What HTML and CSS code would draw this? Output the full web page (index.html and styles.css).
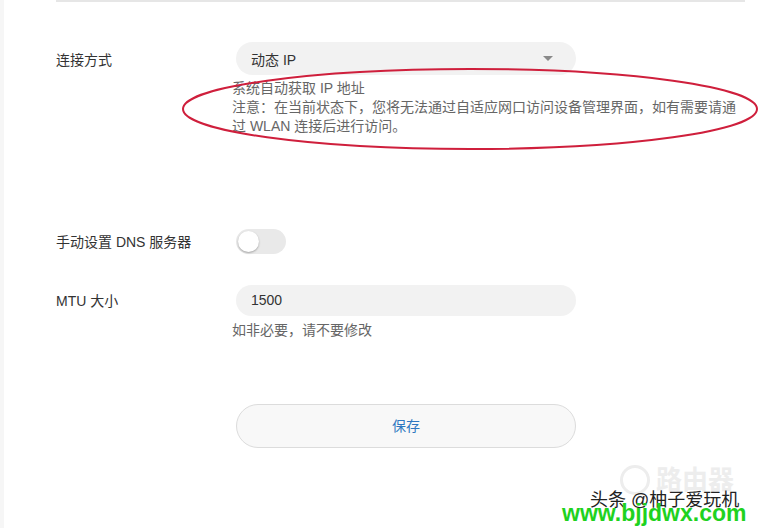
FILE: index.html
```html
<!DOCTYPE html>
<html lang="zh">
<head>
<meta charset="utf-8">
<link rel="stylesheet" href="styles.css">
</head>
<body>
<div class="page">
  <div class="rule"></div>
  <div class="form">
    <div class="row row-conn">
      <div class="label">连接方式</div>
      <div class="control">
        <div class="select">
          <span>动态 IP</span>
          <span class="caret"></span>
        </div>
        <div class="hint">系统自动获取 IP 地址<br>注意：在当前状态下，您将无法通过自适应网口访问设备管理界面，如有需要请通过 WLAN 连接后进行访问。</div>
      </div>
    </div>
    <div class="row row-dns">
      <div class="label">手动设置 DNS 服务器</div>
      <div class="control">
        <div class="toggle"><span class="knob"></span></div>
      </div>
    </div>
    <div class="row row-mtu">
      <div class="label">MTU 大小</div>
      <div class="control">
        <div class="input">1500</div>
        <div class="hint">如非必要，请不要修改</div>
      </div>
    </div>
    <div class="row row-save">
      <div class="label"></div>
      <div class="control">
        <div class="button">保存</div>
      </div>
    </div>
  </div>
  <svg class="mark" width="590" height="90" viewBox="0 0 590 90">
    <ellipse cx="289" cy="41" rx="287" ry="40" fill="none" stroke="#cf1f3c" stroke-width="2"/>
  </svg>
  <div class="wm">
    <div class="wm-logo"><span class="wm-circle"></span><span class="wm-text">路由器</span></div>
    <div class="wm-author">头条 @柚子爱玩机</div>
    <div class="wm-url">www.bjjdwx.com</div>
  </div>
</div>
</body>
</html>
```

FILE: styles.css
```css
html, body {
  margin: 0;
  padding: 0;
  background: #fff;
}
body {
  width: 760px;
  height: 528px;
  overflow: hidden;
  font-family: "Liberation Sans", "Noto Sans CJK SC", sans-serif;
  font-size: 14px;
  color: #333;
}
.page {
  position: relative;
  height: 528px;
  border-left: 4px solid #f6f6f6;
  box-sizing: border-box;
}
.rule {
  margin-left: 52px;
  width: 689px;
  height: 2px;
  background: #e6e6e6;
}
.form {
  padding-left: 52px;
  padding-top: 40px;
}
.row {
  display: grid;
  grid-template-columns: 180px 340px;
  align-items: start;
}
.label {
  line-height: 33px;
  padding-top: 2px;
  white-space: nowrap;
}
.select {
  height: 33px;
  border-radius: 17px;
  background: #f2f2f2;
  display: flex;
  align-items: center;
  justify-content: space-between;
  padding: 0 23px 0 15px;
}
.caret {
  width: 0;
  height: 0;
  border-left: 5px solid transparent;
  border-right: 5px solid transparent;
  border-top: 5px solid #8a8a8a;
}
.hint {
  margin-left: -4px;
  margin-top: 4px;
  width: 510px;
  line-height: 19px;
  color: #666;
}
.row-dns {
  margin-top: 93px;
}
.row-dns .label {
  line-height: 23px;
}
.toggle {
  width: 50px;
  height: 25px;
  border-radius: 13px;
  background: #e9e9e9;
  display: flex;
  align-items: center;
  padding-left: 2px;
  box-sizing: border-box;
}
.knob {
  width: 21px;
  height: 21px;
  border-radius: 50%;
  background: #fff;
  box-shadow: 0 1px 2px rgba(0,0,0,0.3);
}
.row-mtu {
  margin-top: 31px;
}
.row-mtu .label {
  line-height: 29px;
}
.input {
  height: 31px;
  line-height: 31px;
  border-radius: 16px;
  background: #f2f2f2;
  padding-left: 15px;
}
.row-mtu .hint {
  margin-top: 5px;
}
.row-save {
  margin-top: 64px;
}
.button {
  height: 44px;
  line-height: 42px;
  box-sizing: border-box;
  border: 1px solid #dcdcdc;
  border-radius: 22px;
  background: #f8f8f8;
  text-align: center;
  color: #2f78c0;
}
.mark {
  position: absolute;
  left: 177px;
  top: 68px;
}
.wm {
  position: absolute;
  left: 552px;
  top: 460px;
  width: 208px;
  height: 68px;
}
.wm-logo {
  position: absolute;
  left: 64px;
  top: 4px;
  display: flex;
  align-items: center;
  gap: 6px;
}
.wm-circle {
  width: 30px;
  height: 30px;
  border-radius: 50%;
  border: 3px solid #ededed;
  box-sizing: border-box;
}
.wm-text {
  font-size: 26px;
  font-weight: bold;
  color: #ededed;
  line-height: 32px;
}
.wm-author {
  position: absolute;
  left: 34px;
  top: 29px;
  font-size: 18px;
  line-height: 22px;
  color: #222;
  white-space: nowrap;
}
.wm-url {
  position: absolute;
  left: 6px;
  top: 40px;
  font-size: 23px;
  font-weight: bold;
  line-height: 26px;
  color: #1fd21f;
  white-space: nowrap;
}
```
